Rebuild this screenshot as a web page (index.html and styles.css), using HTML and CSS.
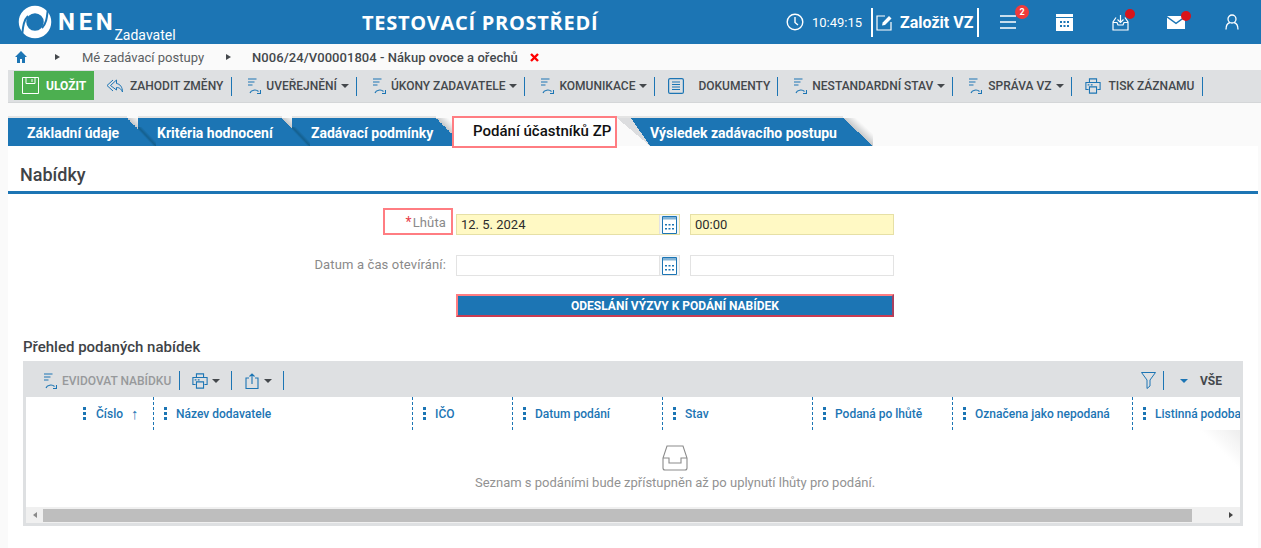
FILE: index.html
```html
<!DOCTYPE html>
<html lang="cs">
<head>
<meta charset="utf-8">
<title>NEN</title>
<link rel="stylesheet" href="styles.css">
</head>
<body>
<svg class="defs" width="0" height="0">
  <symbol id="flow" viewBox="0 0 14 16"><path d="M1 1h8.500M1 4h6.500M1 7h4.500M3 15c1-3 6-4 8.500-1.500M13.500 12v3.500H10" fill="none" stroke="#1c75b4" stroke-width="1.100"/></symbol>
  <symbol id="printer" viewBox="0 0 18 18"><path d="M5 5V1h8v4M4 13H1V5h16v8h-3M5 10h8v7H5z" fill="none" stroke="#1c75b4" stroke-width="1.200"/><path d="M3 7h2v1.500H3zM6.500 7h2v1.500h-2z" fill="#1c75b4"/></symbol>
  <symbol id="cal" viewBox="0 0 15 18"><path d="M.5.500h14v17H.5z" fill="#fff" stroke="#1c75b4"/><path d="M1 1h13v2.500H1z" fill="#1c75b4" opacity=".55"/><path d="M3 8h2v1.500H3zM6.500 8h2v1.500h-2zM10 8h2v1.500h-2zM3 12h2v1.500H3zM6.500 12h2v1.500h-2zM10 12h2v1.500h-2z" fill="#1c75b4"/></symbol>
</svg>

<header class="topbar">
  <div class="brand">
    <svg class="logo" width="34" height="34" viewBox="0 0 34 34"><circle cx="17" cy="17" r="12.500" fill="none" stroke="#fff" stroke-width="7.500"/><path d="M4 31C5 23 5 16 10 11M30 3C29 11 29 18 24 23" fill="none" stroke="#1c75b4" stroke-width="2"/></svg>
    <span class="brand-name">NEN</span>
    <span class="brand-role">Zadavatel</span>
  </div>
  <div class="env-title">TESTOVACÍ PROSTŘEDÍ</div>
  <div class="top-right">
    <svg class="clock" width="18" height="18" viewBox="0 0 18 18"><circle cx="9" cy="9" r="7.800" fill="none" stroke="#fff" stroke-width="1.400"/><path d="M9 4v5.500l3 2.500" fill="none" stroke="#fff" stroke-width="1.400"/></svg>
    <span class="time">10:49:15</span>
    <div class="new-vz">
      <svg width="17" height="17" viewBox="0 0 17 17"><path d="M9 2H1v14h14V8" fill="none" stroke="#fff" stroke-width="1.200"/><path d="M6 11.500l.7-3L13 2l2.500 2.500L9 11z" fill="#fff"/></svg>
      <span>Založit VZ</span>
    </div>
    <div class="top-icon menu-icon">
      <svg width="17" height="16" viewBox="0 0 17 16"><path d="M0 2h16M0 8h16M0 14h16" stroke="#fff" stroke-width="1.500"/></svg>
      <span class="badge">2</span>
    </div>
    <div class="top-icon cal-icon">
      <svg width="17" height="17" viewBox="0 0 17 17"><path d="M0 0h17v17H0z" fill="#fff"/><path d="M0 3.500h17" stroke="#1c75b4"/><path d="M4 7h2v2H4zM7.500 7h2v2h-2zM11 7h2v2h-2zM4 11h2v2H4zM7.500 11h2v2h-2zM11 11h2v2h-2z" fill="#1c75b4"/></svg>
    </div>
    <div class="top-icon inbox-icon">
      <svg width="17" height="17" viewBox="0 0 17 17"><path d="M4 3.500L1 8v8h15V8l-3-4.500M1 8.500h4l1 2.500h5l1-2.500h4M8.500 1v7M5.500 5.500l3 3 3-3" fill="none" stroke="#fff" stroke-width="1.200"/></svg>
      <span class="dot"></span>
    </div>
    <div class="top-icon mail-icon">
      <svg width="18" height="13" viewBox="0 0 18 13"><path d="M0 0h18L9 6.500zM0 1.800l9 6.500 9-6.500V13H0z" fill="#fff"/></svg>
      <span class="dot"></span>
    </div>
    <div class="top-icon user-icon">
      <svg width="14" height="16" viewBox="0 0 14 16"><circle cx="7" cy="5" r="4" fill="none" stroke="#fff" stroke-width="1.300"/><path d="M1 15.500c0-4 2-6.500 4-7M13 15.500c0-4-2-6.500-4-7" fill="none" stroke="#fff" stroke-width="1.300"/></svg>
    </div>
  </div>
</header>

<nav class="crumbs">
  <svg class="home" width="12" height="12" viewBox="0 0 12 12"><path d="M6 0L0 6h2v6h3V8h2v4h3V6h2z" fill="#1c75b4"/></svg>
  <span class="crumb-arrow arrow-a"></span>
  <span class="crumb">Mé zadávací postupy</span>
  <span class="crumb-arrow arrow-b"></span>
  <strong class="crumb-current">N006/24/V00001804 - Nákup ovoce a ořechů</strong>
  <svg class="crumb-close" width="9" height="9" viewBox="0 0 9 9"><path d="M1 1l7 7M8 1L1 8" stroke="#f00" stroke-width="2.400"/></svg>
</nav>

<div class="toolbar">
  <button class="save-btn">
    <svg width="17" height="17" viewBox="0 0 17 17"><path d="M.5.500h16v16H.5zM4 .5v6h9v-6M10 2v3" fill="none" stroke="#fff"/></svg>
    ULOŽIT
  </button>
  <span class="tool discard">
    <svg width="17" height="14" viewBox="0 0 17 14"><path d="M7 1L1 6.500 7 12M10.500 1L4.500 6.500l6 4.500V8.500c2.500 0 4.500 1 6 4.500 0-5-2.500-8-6-8.500z" fill="none" stroke="#1c75b4"/></svg>
    ZAHODIT ZMĚNY
  </span>
  <i class="sep sep-after-discard"></i>
  <span class="tool"><svg class="i-flow" width="14" height="16"><use href="#flow"/></svg>UVEŘEJNĚNÍ<b class="caret"></b></span>
  <i class="sep"></i>
  <span class="tool"><svg class="i-flow" width="14" height="16"><use href="#flow"/></svg>ÚKONY ZADAVATELE<b class="caret"></b></span>
  <i class="sep"></i>
  <span class="tool"><svg class="i-flow" width="14" height="16"><use href="#flow"/></svg>KOMUNIKACE<b class="caret"></b></span>
  <i class="sep"></i>
  <span class="tool docs">
    <svg width="16" height="16" viewBox="0 0 16 16"><rect x=".6" y=".6" width="14.800" height="14.800" rx="1.500" fill="none" stroke="#1c75b4" stroke-width="1.200"/><path d="M4 4h8M4 6.500h8M4 9h8M4 11.500h8" stroke="#1c75b4"/></svg>
    DOKUMENTY
  </span>
  <i class="sep"></i>
  <span class="tool"><svg class="i-flow" width="14" height="16"><use href="#flow"/></svg>NESTANDARDNÍ STAV<b class="caret"></b></span>
  <i class="sep"></i>
  <span class="tool tool-admin"><svg class="i-flow" width="14" height="16"><use href="#flow"/></svg>SPRÁVA VZ<b class="caret"></b></span>
  <i class="sep"></i>
  <span class="tool print"><svg width="16" height="16"><use href="#printer"/></svg>TISK ZÁZNAMU</span>
  <i class="sep sep-last"></i>
</div>

<div class="tabs">
  <a class="tab tab-1">Základní údaje</a>
  <a class="tab tab-2">Kritéria hodnocení</a>
  <a class="tab tab-3">Zadávací podmínky</a>
  <a class="tab-active">Podání účastníků ZP</a>
  <a class="tab tab-5">Výsledek zadávacího postupu</a>
</div>

<main class="panel">
  <h2 class="section-title">Nabídky</h2>
  <div class="form">
    <div class="row row-1">
      <div class="label-col"><span class="label label-req"><em>*</em>Lhůta</span></div>
      <div class="field field-date yellow"><span>12. 5. 2024</span><span class="cal-btn"><svg width="15" height="18"><use href="#cal"/></svg></span></div>
      <div class="field field-time yellow"><span>00:00</span></div>
    </div>
    <div class="row row-2">
      <div class="label-col"><span class="label">Datum a čas otevírání:</span></div>
      <div class="field field-date"><span></span><span class="cal-btn"><svg width="15" height="18"><use href="#cal"/></svg></span></div>
      <div class="field field-time"></div>
    </div>
    <button class="send-btn">ODESLÁNÍ VÝZVY K PODÁNÍ NABÍDEK</button>
  </div>

  <h3 class="list-title">Přehled podaných nabídek</h3>
  <section class="grid">
    <div class="grid-tools">
      <span class="gtool disabled"><svg class="i-flow" width="14" height="16"><use href="#flow"/></svg>EVIDOVAT NABÍDKU</span>
      <i class="sep sep-first"></i>
      <span class="gtool gicon"><svg width="16" height="16"><use href="#printer"/></svg><b class="caret"></b></span>
      <i class="sep sep-wide"></i>
      <span class="gtool gicon gshare"><svg width="14" height="16" viewBox="0 0 14 16"><path d="M4 5H1v10.500h12V5h-3M7 11V1M4.500 3.500L7 1l2.500 2.500" fill="none" stroke="#1c75b4" stroke-width="1.100"/></svg><b class="caret"></b></span>
      <i class="sep sep-wide"></i>
      <span class="grow"></span>
      <svg class="filter" width="15" height="17" viewBox="0 0 15 17"><path d="M.5.500h14L9 8v6l-3 2.500V8z" fill="none" stroke="#1c75b4"/></svg>
      <i class="sep"></i>
      <b class="caret caret-blue"></b>
      <span class="all">VŠE</span>
    </div>
    <div class="grid-head">
      <div class="col col-num"><span class="kebab"></span>Číslo<span class="sort">↑</span></div>
      <div class="col col-name"><span class="kebab"></span>Název dodavatele</div>
      <div class="col col-ico"><span class="kebab"></span>IČO</div>
      <div class="col col-date"><span class="kebab"></span>Datum podání</div>
      <div class="col col-state"><span class="kebab"></span>Stav</div>
      <div class="col col-late"><span class="kebab"></span>Podaná po lhůtě</div>
      <div class="col col-mark"><span class="kebab"></span>Označena jako nepodaná</div>
      <div class="col col-paper"><span class="kebab"></span>Listinná podoba</div>
    </div>
    <div class="empty">
      <svg width="26" height="26" viewBox="0 0 26 26"><path d="M5 1h16l4 12v10a2 2 0 0 1-2 2H3a2 2 0 0 1-2-2V13zM1 13h6v5h12v-5h6" fill="none" stroke="#8b8b8b" stroke-width="1.100"/></svg>
      <p>Seznam s podáními bude zpřístupněn až po uplynutí lhůty pro podání.</p>
    </div>
    <div class="hscroll">
      <span class="sb-arrow sb-left"></span>
      <span class="sb-thumb"></span>
      <span class="sb-arrow sb-right"></span>
    </div>
  </section>
</main>
</body>
</html>
```
FILE: styles.css
```css
* { box-sizing: border-box; }
html, body { height: 100%; }
body {
  margin: 0;
  background: #fafafa;
  font-family: Roboto, "Liberation Sans", sans-serif;
  font-size: 12px;
  color: #3f4347;
  overflow: hidden;
}
.defs { position: absolute; }

.topbar {
  height: 44px;
  background: #1c75b4;
  color: #fff;
  display: flex;
  align-items: center;
}
.brand { width: 362px; display: flex; align-items: center; padding-left: 18px; height: 44px; }
.logo { flex: none; }
.brand-name { font-size: 24px; font-weight: 700; letter-spacing: 3.700px; margin-left: 6px; margin-top: -1px; }
.brand-role { font-size: 14px; margin-left: -2px; margin-top: 25px; }
.env-title {
  width: 424px;
  font-family: "Open Sans", sans-serif;
  font-weight: 700;
  font-size: 20px;
  letter-spacing: .71px;
  white-space: nowrap;
}
.top-right { display: flex; align-items: center; flex: 1; height: 44px; }
.clock { flex: none; }
.time { font-size: 13px; margin-left: 8px; width: 59px; }
.new-vz {
  width: 108px;
  height: 29px;
  border-left: 2px solid #fff;
  border-right: 2px solid #fff;
  display: flex;
  align-items: center;
  gap: 7px;
  padding-left: 3px;
  font-size: 16px;
  font-weight: 700;
  white-space: nowrap;
}
.new-vz svg { flex: none; }
.top-icon { position: relative; display: flex; }
.menu-icon { margin-left: 21px; }
.cal-icon { margin-left: 39px; }
.inbox-icon { margin-left: 39px; }
.mail-icon { margin-left: 38px; }
.user-icon { margin-left: 40px; }
.badge {
  position: absolute;
  top: -9px;
  left: 15px;
  width: 14px;
  height: 14px;
  border-radius: 50%;
  background: #f03a3a;
  font-size: 9px;
  font-weight: 700;
  line-height: 14px;
  text-align: center;
}
.dot {
  position: absolute;
  top: -5px;
  right: -6px;
  width: 10px;
  height: 10px;
  border-radius: 50%;
  background: #d8131b;
}

.crumbs { height: 26px; display: flex; align-items: center; padding-left: 15px; font-size: 13px; }
.home { flex: none; }
.crumb-arrow {
  width: 0; height: 0;
  border-left: 5px solid #44484c;
  border-top: 3.500px solid transparent;
  border-bottom: 3.500px solid transparent;
}
.arrow-a { margin-left: 28px; }
.crumb { margin-left: 22px; color: #5c5f62; font-size: 13px; }
.arrow-b { margin-left: 22px; }
.crumb-current { margin-left: 21px; font-weight: 500; color: #44484c; font-size: 13px; letter-spacing: .05px; }
.crumb-close { margin-left: 12px; }

.toolbar {
  height: 33px;
  margin-left: 8px;
  background: #dee0e2;
  display: flex;
  align-items: center;
  padding-left: 6px;
  font-weight: 500;
  color: #44484c;
  border-bottom: 1px solid #d4d6d8;
}
.save-btn {
  width: 80px;
  height: 29px;
  margin-top: -1px;
  border: 0;
  background: #4caf50;
  color: #fff;
  font: 700 12px Roboto, sans-serif;
  display: flex;
  align-items: center;
  padding: 0 0 0 8px;
  gap: 7px;
}
.tool { display: flex; align-items: center; white-space: nowrap; margin-left: 15px; margin-top: -1px; }
.tool .i-flow { margin-right: 5px; }
.discard { margin-left: 12px; }
.discard svg { margin-right: 7px; }
.docs { margin-left: 13px; }
.docs svg { margin-right: 14px; }
.tool-admin .i-flow { margin-right: 6px; }
.print { margin-left: 13px; }
.print svg { margin-right: 8px; }
.sep { flex: none; width: 1px; height: 19px; background: #1c75b4; margin-left: 7px; }
.sep-after-discard { margin-left: 8px; }
.sep-last { margin-left: 8px; }
.caret {
  display: inline-block;
  width: 0; height: 0;
  margin-left: 4px;
  border-top: 4px solid #44484c;
  border-left: 4px solid transparent;
  border-right: 4px solid transparent;
}

.tabs {
  height: 30px;
  margin: 13px 0 0 8px;
  display: flex;
  align-items: flex-start;
  position: relative;
  font-weight: 700;
  font-size: 14px;
}
.tab {
  --blue: #1c75b4;
  display: block;
  height: 30px;
  line-height: 30px;
  padding: 2px 0 0 19px;
  color: #fff;
  white-space: nowrap;
  background:
    linear-gradient(to top right, var(--blue) 50%, #c6c8ca 50%, #f2f2f2 68%, transparent 72%) right bottom / 28px 28px no-repeat,
    linear-gradient(var(--blue), var(--blue)) left bottom / calc(100% - 28px) 28px no-repeat,
    linear-gradient(#e4e4e4, #e4e4e4) left top / calc(100% - 28px) 2px no-repeat;
}
.tab-1 { width: 147px; }
.tab-2 { width: 172px; margin-left: -17px; }
.tab-3 { width: 172px; margin-left: -18px; margin-right: -12px; }
.tab-2, .tab-3 {
  background:
    linear-gradient(to top right, var(--blue) 50%, #c6c8ca 50%, #f2f2f2 68%, transparent 72%) right bottom / 28px 28px no-repeat,
    linear-gradient(to top right, transparent 42%, #14608f 50%, transparent 62%) left bottom / 18px 19px no-repeat,
    linear-gradient(var(--blue), var(--blue)) left bottom / calc(100% - 28px) 28px no-repeat,
    linear-gradient(#e4e4e4, #e4e4e4) left top / calc(100% - 28px) 2px no-repeat;
}
.tab-active {
  position: relative;
  flex: none;
  width: 165px;
  height: 32px;
  padding-left: 19px;
  line-height: 27px;
  background: #fff;
  border: 2px solid #ff7d82;
  color: #111;
  font-weight: 500;
  font-size: 15px;
  white-space: nowrap;
}
.tab-5 {
  width: 256px;
  padding-left: 33px;
  background:
    linear-gradient(to top right, var(--blue) 50%, #c6c8ca 50%, #f2f2f2 68%, transparent 72%) right bottom / 30px 28px no-repeat,
    linear-gradient(to bottom left, var(--blue) 50%, transparent 50%) 14px bottom / 19px 28px no-repeat,
    linear-gradient(to bottom left, #dcdddf 50%, transparent 50%) left bottom / 33px 28px no-repeat,
    linear-gradient(var(--blue), var(--blue)) 33px bottom / calc(100% - 63px) 28px no-repeat,
    linear-gradient(#e4e4e4, #e4e4e4) left top / calc(100% - 30px) 2px no-repeat;
}

.panel { margin: 0 3px 0 8px; background: #fff; height: 402px; padding-top: 4px; }
.section-title {
  margin: 0;
  height: 44px;
  padding: 14px 0 0 12px;
  font-size: 18px;
  font-weight: 500;
  line-height: 21px;
  color: #3f4347;
  border-bottom: 3px solid #1c75b4;
}
.form { margin-top: 14px; }
.row { display: flex; align-items: flex-end; }
.row-2 { margin-top: 20px; }
.label-col { width: 445px; display: flex; justify-content: flex-end; }
.label {
  color: #8a8a8a;
  font-size: 13px;
  letter-spacing: .14px;
  padding-right: 7px;
  margin-bottom: 4px;
  white-space: nowrap;
}
.label-req {
  width: 70px;
  height: 27px;
  margin: 0;
  border: 2px solid #ff7d82;
  text-align: right;
  line-height: 24px;
  padding-right: 5px;
}
.label-req em { color: #e8404a; font-style: normal; font-size: 14px; margin-right: 1px; }
.field {
  height: 21px;
  margin-left: 3px;
  border: 1px solid #e3e3e3;
  background: #fff;
  display: flex;
  justify-content: space-between;
  font-size: 13px;
  line-height: 19px;
  padding-left: 4px;
  color: #2d2d2d;
}
.field-date { width: 224px; padding-right: 0; }
.field-time { width: 204px; margin-left: 10px; }
.yellow { background: #fff9c4; border-color: #e6e0a6; }
.cal-btn {
  width: 20px;
  background: #f2f5f7;
  border-left: 1px solid #e3e3e3;
  display: flex;
  align-items: center;
  justify-content: center;
}
.send-btn {
  display: block;
  width: 438px;
  height: 23px;
  margin: 18px 0 0 448px;
  padding: 0;
  background: #1c75b4;
  border: 2px solid #ff7d82;
  border-right-color: #a8405f;
  border-bottom-color: #c93c52;
  color: #fff;
  font: 700 12px Roboto, sans-serif;
}
.list-title { margin: 21px 0 0 15px; height: 19px; font-size: 15px; font-weight: 500; line-height: 18px; color: #3f4347; }

.grid {
  margin: 4px 0 0 15px;
  width: 1220px;
  height: 165px;
  background: #dee0e2;
  padding: 0 3px 3px;
}
.grid-tools {
  height: 36px;
  display: flex;
  align-items: center;
  padding: 3px 18px 0 17px;
  font-weight: 500;
}
.grid-tools .i-flow { margin-right: 5px; }
.gtool { display: flex; align-items: center; white-space: nowrap; }
.disabled { color: #97999b; }
.gicon { margin-left: 12px; }
.sep-first { margin-left: 7px; }
.grid-tools .sep-first { margin-left: 8px; }
.grid-tools .sep-wide { margin-left: 11px; }
.gshare { margin-left: 13px; }
.gshare .caret { margin-left: 5px; }
.grow { flex: 1; }
.filter { flex: none; }
.caret-blue { border-top-color: #1c75b4; margin-left: 16px; }
.all { margin-left: 12px; font-weight: 700; color: #44484c; }
.grid-head {
  height: 33px;
  background: #fff;
  display: flex;
  overflow: hidden;
  font-weight: 500;
  color: #1c75b4;
}
.col {
  height: 33px;
  flex: none;
  border-right: 1px dashed #1c75b4;
  display: flex;
  align-items: center;
  padding-left: 10px;
  white-space: nowrap;
}
.kebab {
  flex: none;
  width: 3px;
  height: 13px;
  margin-right: 9px;
  background: radial-gradient(circle at 1.500px 1.500px, #1c75b4 1.500px, transparent 1.600px) 0 0 / 3px 5px repeat-y;
}
.col-num { width: 128px; padding-left: 57px; }
.col-num .kebab { margin-right: 10px; }
.sort { margin-left: 8px; font-size: 15px; font-weight: 400; }
.col-name { width: 259px; }
.col-ico { width: 100px; }
.col-date { width: 150px; }
.col-state { width: 150px; }
.col-late { width: 140px; }
.col-mark { width: 180px; }
.col-paper { width: 108px; border-right: 0; }
.empty {
  height: 77px;
  background: linear-gradient(to bottom left, #ededed, transparent 45%) right top / 45px 45px no-repeat, #fff;
  text-align: center;
  padding: 15px 0 0 84px;
  color: #929292;
}
.empty svg { display: block; margin: 0 auto; }
.empty p { margin: 5px 0 0; font-size: 13px; line-height: 14px; }
.hscroll { height: 16px; background: #f0f0f0; display: flex; align-items: center; }
.sb-thumb { width: 1149px; height: 13px; background: #bebebe; margin-left: 6px; }
.sb-arrow { width: 0; height: 0; border-top: 3px solid transparent; border-bottom: 3px solid transparent; }
.sb-left { border-right: 4px solid #8a8a8a; margin-left: 7px; }
.sb-right { border-left: 4px solid #444; margin-left: 37px; }
```
